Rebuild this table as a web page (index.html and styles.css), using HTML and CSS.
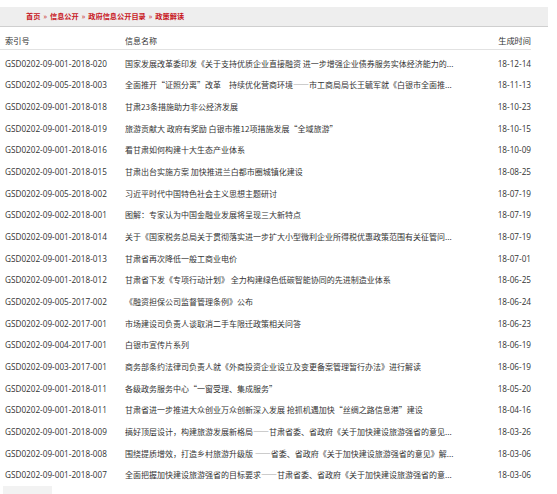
FILE: index.html
```html
<!DOCTYPE html>
<html lang="zh-CN">
<head>
<meta charset="utf-8">
<title>政策解读</title>
<link rel="stylesheet" href="styles.css">
</head>
<body>
<div class="page">
  <div class="crumbs">
    <a href="#">首页</a><span class="sep">»</span><a href="#">信息公开</a><span class="sep">»</span><a href="#">政府信息公开目录</a><span class="sep">»</span><a href="#">政策解读</a>
  </div>
  <div class="list">
    <div class="row head"><span class="c-id">索引号</span><span class="c-name">信息名称</span><span class="c-date">生成时间</span></div>
    <div class="body">
      <div class="row"><span class="c-id">GSD0202-09-001-2018-020</span><span class="c-name">国家发展改革委印发《关于支持优质企业直接融资 进一步增强企业债券服务实体经济能力的...</span><span class="c-date">18-12-14</span></div>
      <div class="row"><span class="c-id">GSD0202-09-005-2018-003</span><span class="c-name">全面推开“证照分离”改革　持续优化营商环境——市工商局局长王毓军就《白银市全面推...</span><span class="c-date">18-11-13</span></div>
      <div class="row"><span class="c-id">GSD0202-09-001-2018-018</span><span class="c-name">甘肃23条措施助力非公经济发展</span><span class="c-date">18-10-23</span></div>
      <div class="row"><span class="c-id">GSD0202-09-001-2018-019</span><span class="c-name">旅游贡献大 政府有奖励 白银市推12项措施发展“全域旅游”</span><span class="c-date">18-10-15</span></div>
      <div class="row"><span class="c-id">GSD0202-09-001-2018-016</span><span class="c-name">看甘肃如何构建十大生态产业体系</span><span class="c-date">18-10-09</span></div>
      <div class="row"><span class="c-id">GSD0202-09-001-2018-015</span><span class="c-name">甘肃出台实施方案 加快推进兰白都市圈城镇化建设</span><span class="c-date">18-08-25</span></div>
      <div class="row"><span class="c-id">GSD0202-09-005-2018-002</span><span class="c-name">习近平时代中国特色社会主义思想主题研讨</span><span class="c-date">18-07-19</span></div>
      <div class="row"><span class="c-id">GSD0202-09-002-2018-001</span><span class="c-name">图解：专家认为中国金融业发展将呈现三大新特点</span><span class="c-date">18-07-19</span></div>
      <div class="row"><span class="c-id">GSD0202-09-001-2018-014</span><span class="c-name">关于《国家税务总局关于贯彻落实进一步扩大小型微利企业所得税优惠政策范围有关征管问...</span><span class="c-date">18-07-19</span></div>
      <div class="row"><span class="c-id">GSD0202-09-001-2018-013</span><span class="c-name">甘肃省再次降低一般工商业电价</span><span class="c-date">18-07-01</span></div>
      <div class="row"><span class="c-id">GSD0202-09-001-2018-012</span><span class="c-name">甘肃省下发《专项行动计划》 全力构建绿色低碳智能协同的先进制造业体系</span><span class="c-date">18-06-25</span></div>
      <div class="row"><span class="c-id">GSD0202-09-005-2017-002</span><span class="c-name">《融资担保公司监督管理条例》公布</span><span class="c-date">18-06-24</span></div>
      <div class="row"><span class="c-id">GSD0202-09-002-2017-001</span><span class="c-name">市场建设司负责人谈取消二手车限迁政策相关问答</span><span class="c-date">18-06-23</span></div>
      <div class="row"><span class="c-id">GSD0202-09-004-2017-001</span><span class="c-name">白银市宣传片系列</span><span class="c-date">18-06-19</span></div>
      <div class="row"><span class="c-id">GSD0202-09-003-2017-001</span><span class="c-name">商务部条约法律司负责人就《外商投资企业设立及变更备案管理暂行办法》进行解读</span><span class="c-date">18-06-19</span></div>
      <div class="row"><span class="c-id">GSD0202-09-001-2018-011</span><span class="c-name">各级政务服务中心“一窗受理、集成服务”</span><span class="c-date">18-05-20</span></div>
      <div class="row"><span class="c-id">GSD0202-09-001-2018-011</span><span class="c-name">甘肃省进一步推进大众创业万众创新深入发展 抢抓机遇加快“丝绸之路信息港”建设</span><span class="c-date">18-04-16</span></div>
      <div class="row"><span class="c-id">GSD0202-09-001-2018-009</span><span class="c-name">搞好顶层设计，构建旅游发展新格局——甘肃省委、省政府《关于加快建设旅游强省的意见...</span><span class="c-date">18-03-26</span></div>
      <div class="row"><span class="c-id">GSD0202-09-001-2018-008</span><span class="c-name">围绕提质增效，打造乡村旅游升级版 ——省委、省政府《关于加快建设旅游强省的意见》解...</span><span class="c-date">18-03-06</span></div>
      <div class="row"><span class="c-id">GSD0202-09-001-2018-007</span><span class="c-name">全面把握加快建设旅游强省的目标要求——甘肃省委、省政府《关于加快建设旅游强省的意...</span><span class="c-date">18-03-06</span></div>
    </div>
  </div>
  <div class="pager"></div>
</div>
</body>
</html>
```

FILE: styles.css
```css
html, body {
  margin: 0;
  padding: 0;
  background: #fff;
}
body {
  font-family: "Open Sans", "Noto Sans CJK SC", sans-serif;
  font-size: 8.2px;
  color: #333;
  overflow: hidden;
}
.page {
  width: 548px;
  padding-top: 7px;
}
.crumbs {
  height: 19px;
  line-height: 19px;
  background: #eeeeee;
  border-bottom: 1px solid #cfcfcf;
  padding-left: 26px;
  font-size: 7.2px;
  font-weight: bold;
  color: #c8161d;
}
.crumbs a {
  color: #c8161d;
  text-decoration: none;
}
.crumbs .sep {
  margin: 0 3px;
  font-weight: normal;
}
.list {
  width: 531px;
}
.row {
  display: grid;
  grid-template-columns: 120px 1fr auto;
  align-items: center;
  height: 21.68px;
  padding-left: 5px;
  white-space: nowrap;
}
.row.head {
  height: auto;
  padding-top: 9px;
  padding-bottom: 3px;
  line-height: 10px;
  border-bottom: 1px solid #e2e2e2;
}
.body {
  padding-top: 2.2px;
}
.c-name {
  overflow: hidden;
  font-family: "Noto Sans CJK SC", sans-serif;
  font-size: 8px;
}
.c-date {
  text-align: right;
}
.pager {
  margin-left: 3px;
  width: 49px;
  height: 10px;
  background: #f2f2f2;
}
```
